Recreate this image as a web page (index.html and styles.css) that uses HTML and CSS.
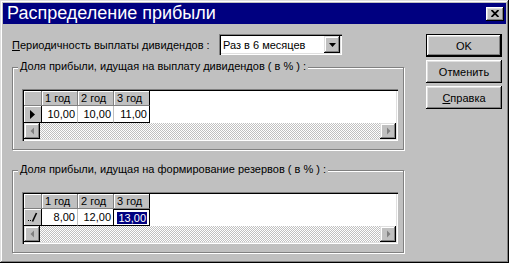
FILE: index.html
```html
<!DOCTYPE html>
<html>
<head>
    <meta charset="utf-8">
    <link rel="stylesheet" href="styles.css">
</head>
<body>
<div class="dialog">
    <div class="caption">
        <span class="caption-text">Распределение прибыли</span>
        <span class="caption-close">
            <svg width="8" height="7" viewBox="0 0 8 7"><path d="M0.5 0 L7.5 7 M7.5 0 L0.5 7" stroke="#000" stroke-width="1.8"/></svg>
        </span>
    </div>
    <div class="client">
        <div class="main">
            <div class="period">
                <span class="period-label"><u>П</u>ериодичность выплаты дивидендов :</span>
                <div class="combo">
                    <span class="combo-text">Раз в 6 месяцев</span>
                    <span class="combo-btn"><svg width="7" height="4" viewBox="0 0 7 4"><polygon points="0,0 7,0 3.5,4" fill="#000"/></svg></span>
                </div>
            </div>

            <div class="group">
                <span class="group-title"><u>Д</u>оля прибыли, идущая на выплату дивидендов ( в % ) :</span>
                <div class="dbgrid">
                    <div class="cells">
                        <div class="fix"></div>
                        <div class="fix hd">1 год</div>
                        <div class="fix hd">2 год</div>
                        <div class="fix hd last">3 год</div>
                        <div class="fix ind"><svg width="5" height="9" viewBox="0 0 5 9"><polygon points="0,0 5,4.5 0,9" fill="#000"/></svg></div>
                        <div class="cell">10,00</div>
                        <div class="cell">10,00</div>
                        <div class="cell last">11,00</div>
                    </div>
                    <div class="hscroll">
                        <span class="sbtn"><svg width="5" height="8" viewBox="0 0 5 8"><polygon points="4,0.5 0.5,4 4,7.5" fill="#808080"/></svg></span>
                        <span class="track"></span>
                        <span class="sbtn"><svg width="5" height="8" viewBox="0 0 5 8"><polygon points="1,0.5 4.5,4 1,7.5" fill="#808080"/></svg></span>
                    </div>
                </div>
            </div>

            <div class="group">
                <span class="group-title">Доля прибыли, идущая на формирование резервов ( в % ) :</span>
                <div class="dbgrid">
                    <div class="cells">
                        <div class="fix"></div>
                        <div class="fix hd">1 год</div>
                        <div class="fix hd">2 год</div>
                        <div class="fix hd last">3 год</div>
                        <div class="fix ind"><svg width="10" height="10" viewBox="0 0 10 10"><rect x="0" y="8" width="1" height="1" fill="#000"/><rect x="2" y="8" width="1" height="1" fill="#000"/><path d="M4.5 9.5 L8.5 1" stroke="#000" stroke-width="1.6"/></svg></div>
                        <div class="cell">8,00</div>
                        <div class="cell">12,00</div>
                        <div class="cell last editing"><span class="sel">13,00</span></div>
                    </div>
                    <div class="hscroll">
                        <span class="sbtn"><svg width="5" height="8" viewBox="0 0 5 8"><polygon points="4,0.5 0.5,4 4,7.5" fill="#808080"/></svg></span>
                        <span class="track"></span>
                        <span class="sbtn"><svg width="5" height="8" viewBox="0 0 5 8"><polygon points="1,0.5 4.5,4 1,7.5" fill="#808080"/></svg></span>
                    </div>
                </div>
            </div>
        </div>

        <div class="buttons">
            <div class="btn default">OK</div>
            <div class="btn">Отменить</div>
            <div class="btn"><u>С</u>правка</div>
        </div>
    </div>
</div>
</body>
</html>
```

FILE: styles.css
```css
* {
    box-sizing: border-box;
}

body {
    margin: 0;
    background: #c0c0c0;
    font-family: "Liberation Sans", Arial, sans-serif;
    font-size: 11px;
    color: #000;
}

.dialog {
    width: 509px;
    height: 263px;
    padding: 3px;
    background: #c0c0c0;
    display: flex;
    flex-direction: column;
    box-shadow: inset -1px -1px #000, inset 1px 1px #dfdfdf, inset -2px -2px #808080, inset 2px 2px #fff;
}

/* title bar */
.caption {
    height: 21px;
    background: #000080;
    color: #fff;
    display: flex;
    align-items: center;
    justify-content: space-between;
    padding: 0 2px 0 4px;
}

.caption-text {
    font-size: 18px;
    line-height: 21px;
}

.caption-close {
    width: 18px;
    height: 14px;
    background: #c0c0c0;
    display: flex;
    align-items: center;
    justify-content: center;
    box-shadow: inset -1px -1px #000, inset 1px 1px #fff, inset -2px -2px #808080, inset 2px 2px #dfdfdf;
}

/* client area */
.client {
    flex: 1;
    display: flex;
    padding: 10px 0 0 9px;
}

.main {
    width: 393px;
}

.period {
    display: flex;
    align-items: center;
    height: 21px;
}

.period-label {
    width: 207px;
}

.combo {
    width: 123px;
    height: 21px;
    background: #fff;
    padding: 2px;
    display: flex;
    align-items: center;
    box-shadow: inset 1px 1px #808080, inset 2px 2px #000, inset -1px -1px #fff, inset -2px -2px #dfdfdf;
}

.combo-text {
    flex: 1;
    padding-left: 2px;
}

.combo-btn {
    width: 16px;
    height: 17px;
    background: #c0c0c0;
    display: flex;
    align-items: center;
    justify-content: center;
    box-shadow: inset -1px -1px #000, inset 1px 1px #dfdfdf, inset -2px -2px #808080, inset 2px 2px #fff;
}

/* group boxes */
.group {
    position: relative;
    width: 392px;
    height: 83px;
    margin-top: 12px;
    padding: 21px 0 0 9px;
    border: 1px solid #808080;
    box-shadow: inset 1px 1px #fff, 1px 1px #fff;
}

.group + .group {
    margin-top: 20px;
}

.group-title {
    position: absolute;
    top: -8px;
    left: 5px;
    padding: 0 2px;
    background: #c0c0c0;
    line-height: 13px;
}

/* data grid */
.dbgrid {
    width: 376px;
    height: 52px;
    padding: 2px;
    background: #fff;
    display: flex;
    flex-direction: column;
    box-shadow: inset 1px 1px #808080, inset 2px 2px #000, inset -1px -1px #fff, inset -2px -2px #dfdfdf;
}

.cells {
    flex: 1;
    display: grid;
    grid-template-columns: 18px 36px 36px 36px;
    grid-template-rows: 15px 17px;
    align-content: start;
}

.fix {
    background: #c0c0c0;
    border-right: 1px solid #808080;
    border-bottom: 1px solid #808080;
    box-shadow: inset 1px 1px #fff;
}

.hd {
    padding-left: 3px;
    line-height: 14px;
}

.hd.last {
    border-right-color: #000;
}

.ind {
    display: flex;
    align-items: center;
    justify-content: center;
    border-right-color: #000;
    border-bottom-color: #000;
}

.cell {
    text-align: right;
    padding-right: 2px;
    line-height: 16px;
    border-right: 1px solid #c0c0c0;
    border-bottom: 1px solid #000;
}

.cell.last {
    border-right-color: #000;
}

.editing {
    border: 1px solid #000;
    box-shadow: inset 0 0 0 1px #fff;
    margin-left: -1px;
    line-height: 14px;
    padding-top: 1px;
}

.sel {
    background: #000080;
    color: #fff;
    padding: 0 1px;
}

.hscroll {
    height: 16px;
    display: flex;
}

.sbtn {
    width: 16px;
    height: 16px;
    background: #c0c0c0;
    display: flex;
    align-items: center;
    justify-content: center;
    box-shadow: inset -1px -1px #000, inset 1px 1px #dfdfdf, inset -2px -2px #808080, inset 2px 2px #fff;
}

.track {
    flex: 1;
    background: repeating-conic-gradient(#c0c0c0 0 25%, #fff 0 50%) 0 0 / 2px 2px;
}

/* buttons */
.buttons {
    margin-left: 21px;
    width: 76px;
    display: flex;
    flex-direction: column;
    gap: 3px;
}

.btn {
    height: 23px;
    display: flex;
    align-items: center;
    justify-content: center;
    background: #c0c0c0;
    box-shadow: inset -1px -1px #000, inset 1px 1px #fff, inset -2px -2px #808080, inset 2px 2px #dfdfdf;
}

.btn.default {
    border: 1px solid #000;
}
```
